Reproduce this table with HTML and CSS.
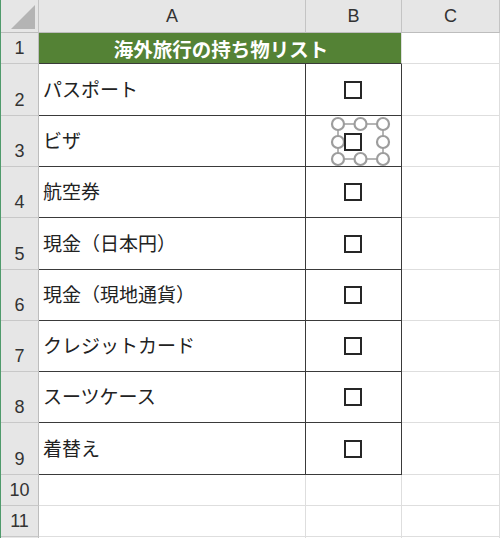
FILE: index.html
```html
<!DOCTYPE html>
<html lang="ja">
<head>
<meta charset="utf-8">
<title>海外旅行の持ち物リスト</title>
<link rel="stylesheet" href="styles.css">
</head>
<body>
<div class="sheet">
  <div class="corner"><span class="tri"></span></div>
  <div class="colhead">A</div>
  <div class="colhead">B</div>
  <div class="colhead">C</div>

  <div class="rowhead">1</div>
  <div class="title">海外旅行の持ち物リスト</div>
  <div class="cell"></div>

  <div class="rowhead">2</div>
  <div class="cell item">パスポート</div>
  <div class="cell check"><span class="box"></span></div>
  <div class="cell"></div>

  <div class="rowhead">3</div>
  <div class="cell item">ビザ</div>
  <div class="cell check sel"><span class="box"></span>
    <svg class="handles" width="95" height="51" viewBox="0 0 95 51">
      <rect x="32" y="8" width="45" height="35" fill="none" stroke="#9d9d9d" stroke-width="1.5"/>
      <g fill="#fff" stroke="#9d9d9d" stroke-width="2.2">
        <circle cx="32" cy="8" r="6"/><circle cx="54.5" cy="8" r="6"/><circle cx="77" cy="8" r="6"/>
        <circle cx="32" cy="26" r="6"/><circle cx="77" cy="26" r="6"/>
        <circle cx="32" cy="43" r="6"/><circle cx="54.5" cy="43" r="6"/><circle cx="77" cy="43" r="6"/>
      </g>
    </svg>
    <span class="box top"></span>
  </div>
  <div class="cell"></div>

  <div class="rowhead">4</div>
  <div class="cell item">航空券</div>
  <div class="cell check"><span class="box"></span></div>
  <div class="cell"></div>

  <div class="rowhead">5</div>
  <div class="cell item">現金（日本円）</div>
  <div class="cell check"><span class="box"></span></div>
  <div class="cell"></div>

  <div class="rowhead">6</div>
  <div class="cell item">現金（現地通貨）</div>
  <div class="cell check"><span class="box"></span></div>
  <div class="cell"></div>

  <div class="rowhead">7</div>
  <div class="cell item">クレジットカード</div>
  <div class="cell check"><span class="box"></span></div>
  <div class="cell"></div>

  <div class="rowhead">8</div>
  <div class="cell item">スーツケース</div>
  <div class="cell check"><span class="box"></span></div>
  <div class="cell"></div>

  <div class="rowhead">9</div>
  <div class="cell item">着替え</div>
  <div class="cell check"><span class="box"></span></div>
  <div class="cell"></div>

  <div class="rowhead">10</div>
  <div class="cell"></div>
  <div class="cell"></div>
  <div class="cell"></div>

  <div class="rowhead">11</div>
  <div class="cell"></div>
  <div class="cell"></div>
  <div class="cell"></div>

  <div class="rowhead last"></div>
  <div class="cell last"></div>
  <div class="cell last"></div>
  <div class="cell last"></div>
</div>
</body>
</html>
```

FILE: styles.css
```css
* { box-sizing: border-box; }
html, body { margin: 0; padding: 0; background: #fff; }
body {
  width: 500px;
  height: 538px;
  overflow: hidden;
  font-family: "Liberation Sans", "Noto Sans CJK JP", sans-serif;
}
.sheet {
  display: grid;
  grid-template-columns: 38px 267px 96px 98px;
  grid-template-rows: 33px 31px 52px 51px 51px 52px 51px 51px 51px 52px 31px 31px 1px;
  border-left: 1px solid #4f9a6b;
}
.corner {
  background: #e6e6e6;
  border-right: 1px solid #c4c4c4;
  border-bottom: 1px solid #bdbdbd;
  position: relative;
}
.tri {
  position: absolute;
  right: 3px;
  bottom: 3px;
  width: 0;
  height: 0;
  border-left: 24px solid transparent;
  border-bottom: 24px solid #b4b4b4;
}
.colhead {
  background: #e6e6e6;
  border-right: 1px solid #c4c4c4;
  border-bottom: 1px solid #bdbdbd;
  display: flex;
  align-items: center;
  justify-content: center;
  font-size: 18px;
  color: #333;
  padding-top: 1px;
}
.rowhead {
  background: #e6e6e6;
  border-right: 1px solid #bdbdbd;
  border-bottom: 1px solid #c8c8c8;
  display: flex;
  align-items: flex-end;
  justify-content: center;
  font-size: 18px;
  color: #333;
  padding-bottom: 4px;
}
.rowhead.last, .cell.last { border-bottom: none; }
.cell {
  border-right: 1px solid #dedede;
  border-bottom: 1px solid #dedede;
  position: relative;
}
.title {
  grid-column: span 2;
  background: #548235;
  color: #fff;
  font-family: "Noto Sans CJK JP", sans-serif;
  font-weight: bold;
  font-size: 19.5px;
  display: flex;
  align-items: center;
  justify-content: center;
  border-bottom: 1px solid #3a3a3a;
  border-right: 1px solid #dedede;
  padding-left: 2px;
}
.item {
  font-family: "Noto Sans CJK JP", sans-serif;
  font-size: 19px;
  color: #222;
  display: flex;
  align-items: center;
  padding-left: 4px;
  padding-bottom: 3px;
  border-right: 1px solid #3a3a3a;
  border-bottom: 1px solid #3a3a3a;
}
.check {
  display: flex;
  align-items: center;
  justify-content: center;
  border-right: 1px solid #3a3a3a;
  border-bottom: 1px solid #3a3a3a;
  padding-right: 1px;
}
.box {
  width: 18px;
  height: 18px;
  border: 2px solid #262626;
  background: #fff;
}
.sel .box { visibility: hidden; }
.sel .box.top {
  visibility: visible;
  position: absolute;
  left: 38px;
  top: 17px;
}
.handles {
  position: absolute;
  left: 0;
  top: 0;
  overflow: visible;
}
```
